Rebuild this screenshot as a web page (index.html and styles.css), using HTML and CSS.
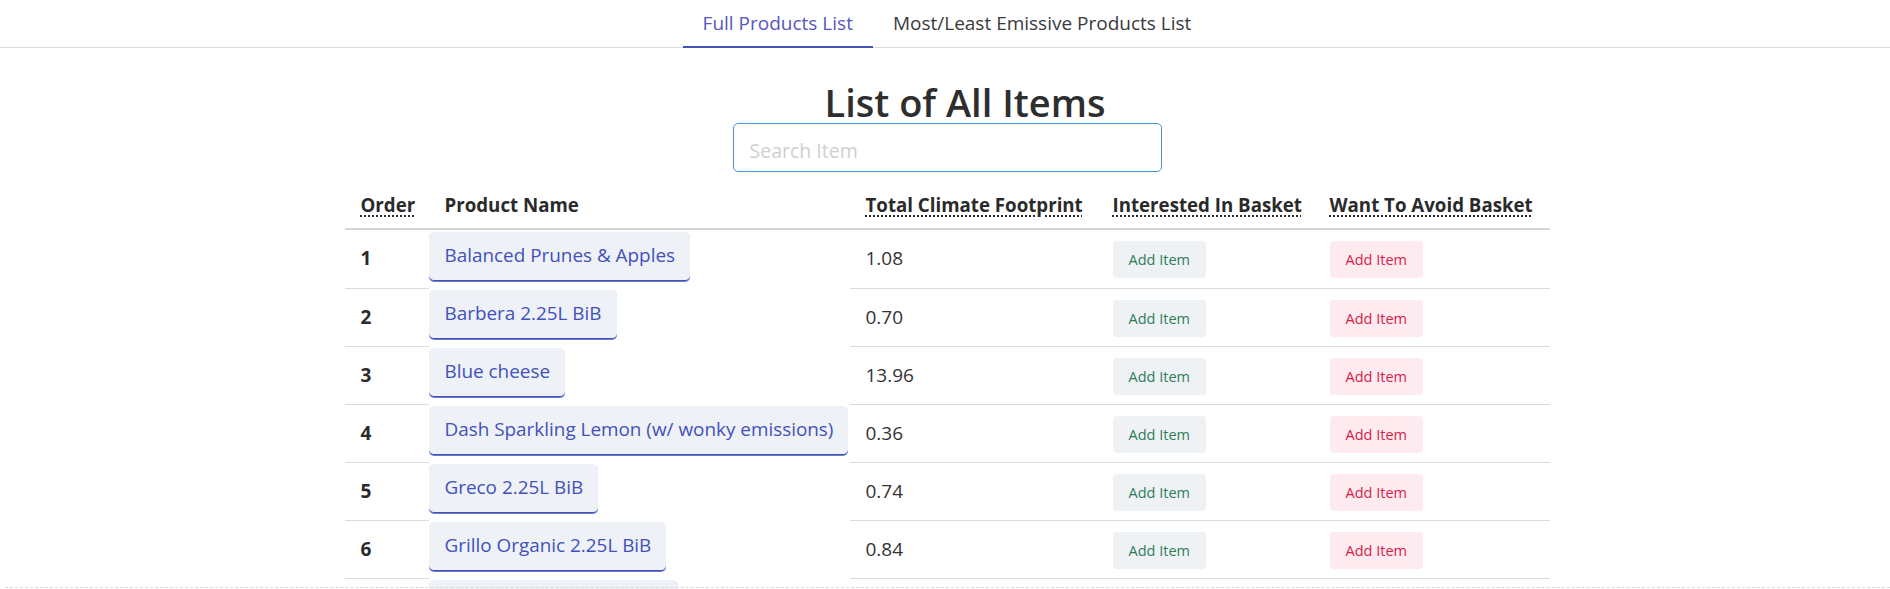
FILE: index.html
```html
<!DOCTYPE html>
<html lang="en">
<head>
<meta charset="utf-8">
<title>List of All Items</title>
<link rel="stylesheet" href="styles.css">
</head>
<body>
<nav class="tabs">
  <a class="tab active">Full Products List</a>
  <a class="tab">Most/Least Emissive Products List</a>
</nav>
<main class="page">
  <h1 class="title">List of All Items</h1>
  <div class="search-wrap">
    <input class="search" type="text" placeholder="Search Item">
  </div>
  <table class="items">
    <colgroup>
      <col class="c-order"><col class="c-name"><col class="c-foot"><col class="c-int"><col class="c-avoid">
    </colgroup>
    <thead>
      <tr>
        <th><abbr title="Order">Order</abbr></th>
        <th>Product Name</th>
        <th><abbr title="Total Climate Footprint">Total Climate Footprint</abbr></th>
        <th><abbr title="Interested In Basket">Interested In Basket</abbr></th>
        <th><abbr title="Want To Avoid Basket">Want To Avoid Basket</abbr></th>
      </tr>
    </thead>
    <tbody>
      <tr>
        <td class="num">1</td>
        <td class="name"><button class="name-btn">Balanced Prunes &amp; Apples</button></td>
        <td>1.08</td>
        <td><button class="add add-good">Add Item</button></td>
        <td><button class="add add-bad">Add Item</button></td>
      </tr>
      <tr>
        <td class="num">2</td>
        <td class="name"><button class="name-btn">Barbera 2.25L BiB</button></td>
        <td>0.70</td>
        <td><button class="add add-good">Add Item</button></td>
        <td><button class="add add-bad">Add Item</button></td>
      </tr>
      <tr>
        <td class="num">3</td>
        <td class="name"><button class="name-btn">Blue cheese</button></td>
        <td>13.96</td>
        <td><button class="add add-good">Add Item</button></td>
        <td><button class="add add-bad">Add Item</button></td>
      </tr>
      <tr>
        <td class="num">4</td>
        <td class="name"><button class="name-btn">Dash Sparkling Lemon (w/ wonky emissions)</button></td>
        <td>0.36</td>
        <td><button class="add add-good">Add Item</button></td>
        <td><button class="add add-bad">Add Item</button></td>
      </tr>
      <tr>
        <td class="num">5</td>
        <td class="name"><button class="name-btn">Greco 2.25L BiB</button></td>
        <td>0.74</td>
        <td><button class="add add-good">Add Item</button></td>
        <td><button class="add add-bad">Add Item</button></td>
      </tr>
      <tr>
        <td class="num">6</td>
        <td class="name"><button class="name-btn">Grillo Organic 2.25L BiB</button></td>
        <td>0.84</td>
        <td><button class="add add-good">Add Item</button></td>
        <td><button class="add add-bad">Add Item</button></td>
      </tr>
      <tr>
        <td class="num">7</td>
        <td class="name"><button class="name-btn">Montepulciano 2.25L BiB</button></td>
        <td>0.81</td>
        <td><button class="add add-good">Add Item</button></td>
        <td><button class="add add-bad">Add Item</button></td>
      </tr>
    </tbody>
  </table>
</main>
<div class="page-edge"></div>
</body>
</html>
```

FILE: styles.css
```css
* { box-sizing: border-box; }

html, body {
  margin: 0;
  padding: 0;
  background: #ffffff;
  font-family: "Open Sans", "Noto Sans", sans-serif;
  color: #333333;
}

.tabs {
  display: flex;
  justify-content: center;
  border-bottom: 1px solid #dcdcdc;
  height: 48px;
  padding-left: 4px;
}

.tab {
  display: block;
  padding: 0 20px;
  height: 48px;
  line-height: 46px;
  font-size: 19px;
  color: #3a3a3a;
  border-bottom: 2px solid transparent;
  margin-bottom: -1px;
  cursor: pointer;
}

.tab.active {
  color: #5557c0;
  border-bottom-color: #4452b8;
}

.page {
  width: 1205px;
  margin: 0 auto;
  position: relative;
  left: 2px;
}

.title {
  margin: 33px 0 0;
  padding-left: 36px;
  text-align: center;
  font-size: 38px;
  line-height: 42px;
  font-weight: 600;
  color: #2e2e2e;
}

.search-wrap {
  display: flex;
  justify-content: center;
}

.search {
  width: 429px;
  height: 49px;
  border: 1px solid #4a90d6;
  border-radius: 5px;
  padding: 6px 16px 0;
  font-family: inherit;
  font-size: 19.5px;
  color: #333;
  outline: none;
}

.search::placeholder {
  color: #cfcfcf;
}

.items {
  width: 1205px;
  table-layout: fixed;
  border-collapse: collapse;
  font-size: 19px;
}

.c-order { width: 84px; }
.c-name { width: 421px; }
.c-foot { width: 247px; }
.c-int { width: 217px; }
.c-avoid { width: 236px; }

.items th {
  text-align: left;
  font-weight: 700;
  font-size: 18.7px;
  color: #2a2a2a;
  padding: 19px 16px 10px;
  line-height: 27px;
  vertical-align: bottom;
  border-bottom: 2px solid #d6d6d6;
  white-space: nowrap;
}

.items abbr {
  text-decoration: underline dotted #2a2a2a;
  text-underline-offset: 3px;
  text-decoration-thickness: 2px;
}

.items td {
  padding: 0 16px;
  height: 58px;
  line-height: 27px;
  vertical-align: middle;
  border-bottom: 1px solid #dcdcdc;
  color: #333333;
}

.items td.num {
  font-weight: 700;
  color: #2a2a2a;
}

.items td.name {
  padding: 2px 0 7px;
  border-bottom: none;
  vertical-align: top;
}

.name-btn {
  display: inline-block;
  font-family: inherit;
  font-size: 18.9px;
  line-height: 27px;
  padding: 10px 15px 11px 16px;
  background: #eef2f7;
  color: #4350bb;
  border: none;
  border-bottom: 1px solid #3f51b5;
  border-radius: 5px;
  box-shadow: 0 1px 0 #6c7bd0;
  white-space: nowrap;
  cursor: pointer;
}

.add {
  display: inline-block;
  height: 37px;
  padding: 0 16px;
  font-family: inherit;
  font-size: 14.5px;
  line-height: 37px;
  border: none;
  border-radius: 4px;
  cursor: pointer;
  margin-top: 2px;
}

.add-good {
  background: #eef2f5;
  color: #2e7d5b;
}

.add-bad {
  background: #fdebef;
  color: #d81b4a;
}

.page-edge {
  position: fixed;
  left: 5px;
  right: 0;
  bottom: 0;
  height: 2px;
  border-top: 1px dashed #d9d9d9;
}
```
